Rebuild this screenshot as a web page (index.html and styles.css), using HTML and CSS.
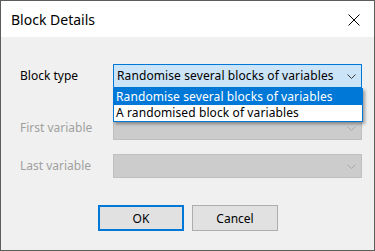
FILE: index.html
```html
<!DOCTYPE html>
<html>
<head>
<meta charset="utf-8">
<link rel="stylesheet" href="styles.css">
</head>
<body>
<div class="window">
  <div class="titlebar">
    <span class="title">Block Details</span>
    <span class="close">
      <svg width="12" height="12" viewBox="0 0 12 12"><path d="M0.5 0.5 L11.5 11.5 M11.5 0.5 L0.5 11.5" stroke="#000" stroke-width="1" fill="none"/></svg>
    </span>
  </div>
  <div class="content">
    <div class="form">
      <div class="row row-first">
        <span class="label">Block type</span>
        <div class="combo-wrap">
          <div class="combo active">
            <span class="combo-text">Randomise several blocks of variables</span>
            <svg class="chev" width="9" height="5" viewBox="0 0 9 5"><polyline points="0.5,0.5 4.5,4.5 8.5,0.5" stroke="#3c3c3c" stroke-width="1" fill="none"/></svg>
          </div>
          <div class="list">
            <div class="item selected">Randomise several blocks of variables</div>
            <div class="item">A randomised block of variables</div>
          </div>
        </div>
      </div>
      <div class="row row-second">
        <span class="label disabled">First variable</span>
        <div class="combo-wrap">
          <div class="combo off">
            <span class="combo-text"></span>
            <svg class="chev" width="9" height="5" viewBox="0 0 9 5"><polyline points="0.5,0.5 4.5,4.5 8.5,0.5" stroke="#a8a8a8" stroke-width="1" fill="none"/></svg>
          </div>
        </div>
      </div>
      <div class="row row-third">
        <span class="label disabled">Last variable</span>
        <div class="combo-wrap">
          <div class="combo off">
            <span class="combo-text"></span>
            <svg class="chev" width="9" height="5" viewBox="0 0 9 5"><polyline points="0.5,0.5 4.5,4.5 8.5,0.5" stroke="#a8a8a8" stroke-width="1" fill="none"/></svg>
          </div>
        </div>
      </div>
    </div>
    <div class="buttons">
      <button class="btn default">OK</button>
      <button class="btn">Cancel</button>
    </div>
  </div>
</div>
</body>
</html>
```
FILE: styles.css
```css
* { box-sizing: border-box; }
html, body { margin: 0; padding: 0; }
body {
  width: 375px;
  height: 251px;
  overflow: hidden;
  font-family: "Noto Sans", "Open Sans", sans-serif;
  font-size: 12px;
  color: #000;
}
.window {
  width: 375px;
  height: 251px;
  border: 1px solid #5c5c5c;
  background: #f0f0f0;
  display: flex;
  flex-direction: column;
}
.titlebar {
  height: 36px;
  background: #fff;
  display: flex;
  align-items: center;
  justify-content: space-between;
  padding-left: 10px;
  padding-right: 14px;
  flex-shrink: 0;
}
.title {
  font-size: 14px;
  line-height: 20px;
  padding-top: 1px;
}
.close {
  display: flex;
  width: 12px;
  height: 12px;
  margin-top: 1px;
}
.content {
  padding: 27px 0 0 19px;
  display: flex;
  flex-direction: column;
}
.form {
  display: flex;
  flex-direction: column;
}
.row {
  display: flex;
  align-items: center;
  height: 24px;
}
.row-second { margin-top: 28px; }
.row-third { margin-top: 14px; }
.label {
  width: 93px;
  line-height: 16px;
}
.label.disabled { color: #a0a0a0; }
.combo-wrap {
  position: relative;
  width: 249px;
  height: 24px;
}
.combo {
  height: 24px;
  display: flex;
  align-items: center;
  justify-content: space-between;
  padding: 0 5px 0 3px;
  border: 1px solid;
}
.combo.active {
  background: #cce4f7;
  border-color: #0078d7;
}
.combo.off {
  background: #cccccc;
  border-color: #bfbfbf;
}
.combo-text { line-height: 16px; letter-spacing: 0.1px; }
.chev { display: block; }
.list {
  position: absolute;
  top: 24px;
  left: 0;
  width: 250px;
  border: 1px solid #0078d7;
  background: #fff;
  box-shadow: 2px 2px 3px rgba(0, 0, 0, 0.35);
  z-index: 2;
}
.item {
  height: 16px;
  line-height: 16px;
  padding-left: 2px;
  letter-spacing: 0.1px;
}
.item.selected {
  background: #0078d7;
  color: #fff;
}
.buttons {
  display: flex;
  justify-content: center;
  gap: 8px;
  margin-top: 27px;
  margin-left: -19px;
  padding-left: 1px;
}
.btn {
  width: 86px;
  height: 26px;
  background: #e1e1e1;
  border: 1px solid #adadad;
  font-family: inherit;
  font-size: 12px;
  color: #000;
  padding: 0;
}
.btn.default {
  border: 2px solid #0078d7;
}
```
